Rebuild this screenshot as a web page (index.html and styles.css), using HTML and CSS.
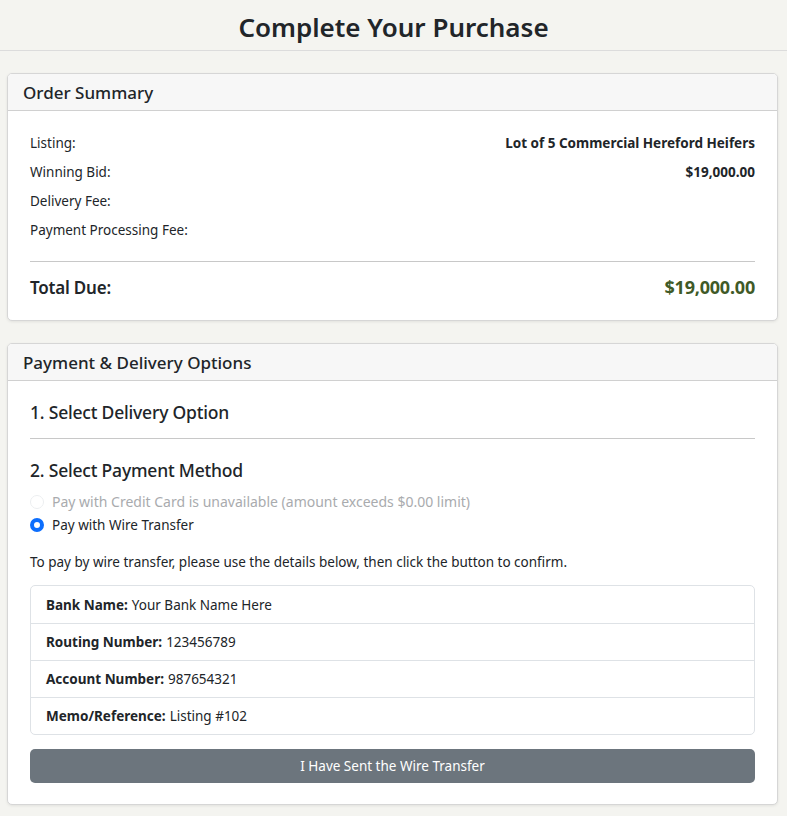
FILE: index.html
```html
<!DOCTYPE html>
<html lang="en">
<head>
<meta charset="utf-8">
<title>Complete Your Purchase</title>
<link rel="stylesheet" href="styles.css">
</head>
<body>
<header class="page-header">
  <h1>Complete Your Purchase</h1>
</header>
<main class="container">
  <section class="card">
    <div class="card-header">Order Summary</div>
    <div class="card-body summary">
      <div class="row"><span>Listing:</span><strong>Lot of 5 Commercial Hereford Heifers</strong></div>
      <div class="row"><span>Winning Bid:</span><strong>$19,000.00</strong></div>
      <div class="row"><span>Delivery Fee:</span><strong></strong></div>
      <div class="row"><span>Payment Processing Fee:</span><strong></strong></div>
      <hr class="rule">
      <div class="row total"><span>Total Due:</span><strong class="total-amount">$19,000.00</strong></div>
    </div>
  </section>

  <section class="card">
    <div class="card-header">Payment &amp; Delivery Options</div>
    <div class="card-body options">
      <h2 class="step">1. Select Delivery Option</h2>
      <hr class="rule step-rule">
      <h2 class="step">2. Select Payment Method</h2>
      <label class="radio disabled"><span class="dot"></span>Pay with Credit Card is unavailable (amount exceeds $0.00 limit)</label>
      <label class="radio"><span class="dot checked"></span>Pay with Wire Transfer</label>
      <p class="note">To pay by wire transfer, please use the details below, then click the button to confirm.</p>
      <ul class="list">
        <li><b>Bank Name:</b> Your Bank Name Here</li>
        <li><b>Routing Number:</b> 123456789</li>
        <li><b>Account Number:</b> 987654321</li>
        <li><b>Memo/Reference:</b> Listing #102</li>
      </ul>
      <button class="btn">I Have Sent the Wire Transfer</button>
    </div>
  </section>
</main>
</body>
</html>
```

FILE: styles.css
```css
* { box-sizing: border-box; }
html, body { margin: 0; padding: 0; }
body {
  background: #f4f4f0;
  font-family: "Noto Sans", "Open Sans", sans-serif;
  color: #212529;
  font-size: 14px;
}
.page-header {
  height: 51px;
  border-bottom: 1px solid #dcdcdc;
  display: flex;
  align-items: center;
  justify-content: center;
}
.page-header h1 {
  margin: 0;
  font-size: 26px;
  font-weight: 600;
  color: #212529;
  line-height: 1;
  padding-top: 4px;
}
.container {
  padding: 22px 9px 10px 7px;
  display: flex;
  flex-direction: column;
  gap: 22px;
}
.card {
  background: #fff;
  border: 1px solid #d6d6d6;
  border-radius: 5px;
  box-shadow: 0 1px 3px rgba(0,0,0,0.08);
  overflow: hidden;
}
.card-header {
  background: #f7f7f7;
  border-bottom: 1px solid #d0d0d0;
  height: 37px;
  padding: 0 15px;
  display: flex;
  align-items: center;
  font-size: 17px;
  font-weight: 500;
}
.card-body {
  padding: 21px 22px 21px 22px;
}
.row {
  display: flex;
  justify-content: space-between;
  align-items: center;
  height: 21px;
  margin-bottom: 8px;
  font-size: 13.5px;
}
.row strong { font-weight: 700; }
.rule {
  border: 0;
  border-top: 1px solid #c8c8c8;
  margin: 21px 0 13px;
}
.row.total {
  height: 24px;
  margin: 0;
  font-size: 17px;
  letter-spacing: -0.2px;
}
.row.total span { font-weight: 600; }
.total-amount { color: #3f5a27; font-size: 18px; }

.options { padding-top: 19px; }
.step {
  margin: 0;
  font-size: 17.5px;
  font-weight: 500;
  letter-spacing: -0.2px;
  line-height: 24px;
}
.step-rule { margin: 14px 0 19px; }
.radio {
  display: flex;
  align-items: center;
  gap: 8px;
  height: 23px;
  font-size: 13.5px;
}
.radio:first-of-type { margin-top: 8px; }
.radio.disabled { color: #a9abae; font-size: 14px; }
.dot {
  width: 14px;
  height: 14px;
  border-radius: 50%;
  border: 1px solid #dee2e6;
  background: #fff;
  flex: none;
}
.radio.disabled .dot { border-color: #eceef0; }
.dot.checked {
  border: 4px solid #0d6efd;
  background: #fff;
}
.note {
  margin: 16px 0 12px;
  font-size: 13.5px;
  line-height: 21px;
}
.list {
  list-style: none;
  margin: 0 0 14px;
  padding: 0;
  border: 1px solid #dee2e6;
  border-radius: 5px;
}
.list li {
  height: 37px;
  display: flex;
  align-items: center;
  padding: 0 15px;
  font-size: 13.5px;
  border-top: 1px solid #dee2e6;
}
.list li:first-child { border-top: 0; }
.list li b { font-weight: 700; margin-right: 4px; }
.btn {
  display: block;
  width: 100%;
  height: 34px;
  border: 0;
  border-radius: 5px;
  background: #6c757d;
  color: #fff;
  font-family: inherit;
  font-size: 13.5px;
  cursor: pointer;
}
```
